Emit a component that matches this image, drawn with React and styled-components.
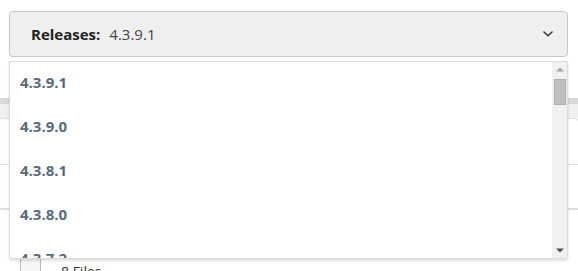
import React from "react";
import styled, { createGlobalStyle } from "styled-components";

const GlobalStyle = createGlobalStyle`
  body {
    margin: 0;
    background: #ffffff;
    font-family: "Open Sans", "Liberation Sans", sans-serif;
  }
`;

const Page = styled.div`
  width: 578px;
  height: 271px;
  overflow: hidden;
  position: relative;
`;

const Toolbar = styled.div`
  padding: 11px 10px 0 9px;
`;

const SelectWrap = styled.div`
  position: relative;
  z-index: 2;
`;

const SelectButton = styled.div`
  height: 44px;
  display: flex;
  align-items: center;
  justify-content: space-between;
  padding: 0 14px 0 21px;
  background: #efefef;
  border: 1px solid #c6c6c6;
  border-radius: 4px;
  font-size: 15px;
`;

const Label = styled.span`
  font-weight: 700;
  color: #222;
  margin-right: 9px;
`;

const Value = styled.span`
  color: #444;
`;

const Menu = styled.div`
  position: absolute;
  top: 50px;
  left: 0;
  right: 0;
  height: 196px;
  display: flex;
  background: #fff;
  border: 1px solid #dcdcdc;
  border-radius: 0 0 3px 3px;
  box-shadow: 0 2px 3px rgba(0, 0, 0, 0.12);
  overflow: hidden;
`;

const List = styled.div`
  flex: 1;
  overflow: hidden;
  padding-top: 0;
  margin-top: -2px;
`;

const Option = styled.div`
  height: 44px;
  display: flex;
  align-items: center;
  padding-left: 10px;
  font-size: 15px;
  font-weight: 700;
  color: #5a6b7c;
`;

const Scrollbar = styled.div`
  width: 15px;
  display: flex;
  flex-direction: column;
  background: #f1f1f1;
`;

const ArrowButton = styled.div`
  height: 15px;
  display: flex;
  align-items: center;
  justify-content: center;
`;

const Track = styled.div`
  flex: 1;
  padding: 2px 1px 0 2px;
`;

const Thumb = styled.div`
  height: 26px;
  background: #bfbfbf;
  border: 1px solid #acacac;
  box-sizing: border-box;
`;

const Content = styled.div`
  margin-top: 41px;
`;

const GrayStrip = styled.div`
  height: 6px;
  background: #d9d9d9;
`;

const LightStrip = styled.div`
  height: 14px;
  background: #eef0f1;
`;

const Card = styled.div`
  margin: 0 -1px 0 -2px;
  border: 1px solid #dddddd;
  border-radius: 4px 4px 0 0;
`;

const Row = styled.div`
  height: ${(p) => p.h}px;
  border-bottom: 1px solid #e0e0e0;
`;

const Footer = styled.div`
  display: flex;
  align-items: flex-start;
  gap: 20px;
  padding: 48px 0 0 20px;
  font-size: 14px;
  color: #333;
`;

const Check = styled.span`
  width: 19px;
  height: 18px;
  border: 1px solid #bdbdbd;
  border-radius: 2px;
  background: #f6f6f6;
`;

const FileCount = styled.span`
  margin-top: 4px;
`;

const versions = [
  "4.3.9.1", "4.3.9.0", "4.3.8.1", "4.3.8.0", "4.3.7.2", "4.3.7.1",
  "4.3.7.0", "4.3.6.2", "4.3.6.1", "4.3.6.0",
];

function Chevron() {
  return (
    <svg width="10" height="6" viewBox="0 0 10 6">
      <path
        d="M1 1l4 3.8L9 1"
        fill="none"
        stroke="#333"
        strokeWidth="1.5"
        strokeLinecap="round"
        strokeLinejoin="round"
      />
    </svg>
  );
}

function Triangle({ up, color }) {
  return (
    <svg width="8" height="5" viewBox="0 0 8 5">
      <path d={up ? "M0 4.5h8L4 0.5z" : "M0 0.5h8L4 4.5z"} fill={color} />
    </svg>
  );
}

export default function App() {
  return (
    <Page>
      <GlobalStyle />
      <Toolbar>
        <SelectWrap>
          <SelectButton>
            <div>
              <Label>Releases:</Label>
              <Value>4.3.9.1</Value>
            </div>
            <Chevron />
          </SelectButton>
          <Menu>
            <List>
              {versions.map((v) => (
                <Option key={v}>{v}</Option>
              ))}
            </List>
            <Scrollbar>
              <ArrowButton>
                <Triangle up color="#a3a3a3" />
              </ArrowButton>
              <Track>
                <Thumb />
              </Track>
              <ArrowButton>
                <Triangle color="#505050" />
              </ArrowButton>
            </Scrollbar>
          </Menu>
        </SelectWrap>
      </Toolbar>
      <Content>
        <GrayStrip />
        <LightStrip />
        <Card>
          <Row h={45} />
          <Row h={43} />
        </Card>
        <Footer>
          <Check />
          <FileCount>8 Files</FileCount>
        </Footer>
      </Content>
    </Page>
  );
}
